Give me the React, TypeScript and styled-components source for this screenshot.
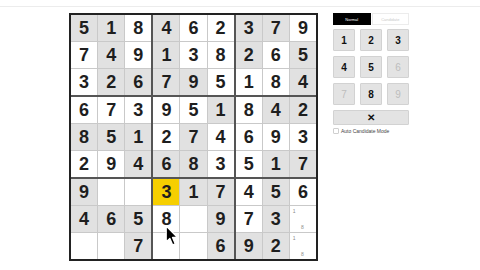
import React from "react";
import styled, { createGlobalStyle } from "styled-components";

const Global = createGlobalStyle`
  html, body { margin: 0; padding: 0; background: #fff; }
  body { font-family: "Liberation Sans", Arial, sans-serif; width: 480px; height: 270px; overflow: hidden; }
`;

const Page = styled.div`
  position: relative;
  width: 480px;
  height: 270px;
`;

const TopRule = styled.div`
  height: 6px;
  border-bottom: 1px solid #ececec;
`;

const Main = styled.div`
  display: flex;
  align-items: flex-start;
  padding: 6px 0 0 69px;
  gap: 15px;
`;

const Board = styled.div`
  box-sizing: border-box;
  width: 249px;
  height: 248px;
  border: 2px solid #222;
  background: #555;
  display: grid;
  grid-template-columns: repeat(3, 1fr);
  grid-template-rows: repeat(3, 1fr);
  gap: 2px;
`;

const Box = styled.div`
  display: grid;
  grid-template-columns: repeat(3, 1fr);
  grid-template-rows: repeat(3, 1fr);
  gap: 1px;
  background: #c9c9c9;
`;

const Cell = styled.div<{ $bg: string }>`
  background: ${(p) => p.$bg};
  display: flex;
  align-items: center;
  justify-content: center;
  font-weight: 700;
  font-size: 18px;
  color: #1e1e1e;
  line-height: 1;
`;

const Cands = styled.div`
  width: 100%;
  height: 100%;
  display: grid;
  grid-template-columns: repeat(3, 1fr);
  grid-template-rows: repeat(3, 1fr);
  font-size: 5px;
  font-weight: 400;
  color: #8a8a8a;
  padding: 1px 1px 1px 0;
  box-sizing: border-box;
`;

const Cand = styled.span`
  display: flex;
  align-items: center;
  justify-content: center;
`;

const Panel = styled.div`
  width: 76px;
  display: flex;
  flex-direction: column;
`;

const Tabs = styled.div`
  display: flex;
  gap: 1px;
  height: 12px;
  margin-bottom: 4px;
`;

const Tab = styled.div<{ $active?: boolean }>`
  flex: 1;
  box-sizing: border-box;
  display: flex;
  align-items: center;
  justify-content: center;
  font-size: 4px;
  background: ${(p) => (p.$active ? "#000" : "#fff")};
  color: ${(p) => (p.$active ? "#fff" : "#c8c8c8")};
  border: 1px solid ${(p) => (p.$active ? "#000" : "#ececec")};
`;

const Pad = styled.div`
  display: grid;
  grid-template-columns: repeat(3, 22px);
  grid-auto-rows: 22px;
  column-gap: 5px;
  row-gap: 5px;
`;

const Key = styled.div<{ $off?: boolean }>`
  box-sizing: border-box;
  background: #e3e3e3;
  border: 1px solid #d2d2d2;
  border-radius: 1px;
  display: flex;
  align-items: center;
  justify-content: center;
  font-size: 10px;
  font-weight: ${(p) => (p.$off ? 400 : 700)};
  color: ${(p) => (p.$off ? "#bdbdbd" : "#111")};
`;

const Erase = styled(Key)`
  margin-top: 5px;
  height: 15px;
  width: 76px;
  font-size: 10px;
`;

const AutoRow = styled.label`
  display: flex;
  align-items: center;
  gap: 2px;
  margin-top: 3px;
  font-size: 5px;
  color: #444;
`;

const Check = styled.span`
  width: 4px;
  height: 4px;
  border: 1px solid #cfcfcf;
  border-radius: 1px;
  background: #fff;
`;

const Cursor = styled.svg`
  position: absolute;
  left: 165px;
  top: 225px;
`;

const values = [
  "518462379",
  "749138265",
  "326795184",
  "673951842",
  "851274693",
  "294683517",
  "9  317456",
  "4658 973c",
  "  7  692c",
];

const shades = [
  "GGWGWWGGW",
  "WGWGWWGWG",
  "WGGGGWWWG",
  "WWWWWGWGG",
  "GGGWGWWWW",
  "WWGGGWWGG",
  "GWWYGGWGW",
  "GGGWWGWGW",
  "WWGWWGGGW",
];

const colorOf: Record<string, string> = { G: "#e1e1e1", W: "#ffffff", Y: "#f6cf00" };

export default function App() {
  const boxes = [];
  for (let b = 0; b < 9; b++) {
    const br = Math.floor(b / 3) * 3;
    const bc = (b % 3) * 3;
    const cells = [];
    for (let i = 0; i < 9; i++) {
      const r = br + Math.floor(i / 3);
      const c = bc + (i % 3);
      const v = values[r][c];
      cells.push(
        <Cell key={i} $bg={colorOf[shades[r][c]]}>
          {v === "c" ? (
            <Cands>
              <Cand>1</Cand>
              <Cand />
              <Cand />
              <Cand />
              <Cand />
              <Cand />
              <Cand />
              <Cand>8</Cand>
              <Cand />
            </Cands>
          ) : v === " " ? null : (
            v
          )}
        </Cell>
      );
    }
    boxes.push(<Box key={b}>{cells}</Box>);
  }
  const keys = ["1", "2", "3", "4", "5", "6", "7", "8", "9"];
  const off = new Set(["6", "7", "9"]);
  return (
    <Page>
      <Global />
      <TopRule />
      <Main>
        <Board>{boxes}</Board>
        <Panel>
          <Tabs>
            <Tab $active>Normal</Tab>
            <Tab>Candidate</Tab>
          </Tabs>
          <Pad>
            {keys.map((k) => (
              <Key key={k} $off={off.has(k)}>
                {k}
              </Key>
            ))}
          </Pad>
          <Erase>✕</Erase>
          <AutoRow>
            <Check />
            Auto Candidate Mode
          </AutoRow>
        </Panel>
      </Main>
      <Cursor width="15" height="22" viewBox="0 0 14 21">
        <path
          d="M1 1 L1 16 L4.5 12.8 L7.2 19 L9.6 18 L7 11.9 L11.8 11.9 Z"
          fill="#000"
          stroke="#fff"
          strokeWidth="1.2"
          strokeLinejoin="round"
        />
      </Cursor>
    </Page>
  );
}
